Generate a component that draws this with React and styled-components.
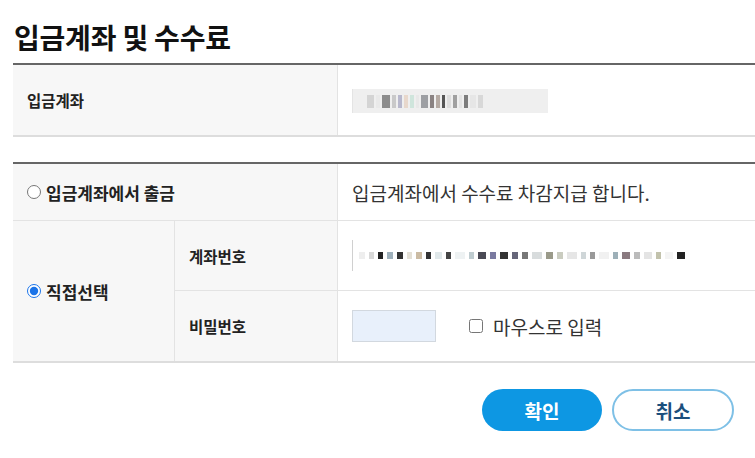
import React from 'react';
import styled, { createGlobalStyle } from 'styled-components';

const GlobalStyle = createGlobalStyle`
  html, body {
    margin: 0;
    padding: 0;
    background: #fff;
  }
  body {
    font-family: 'Noto Sans CJK KR', 'Noto Sans', sans-serif;
    color: #222;
  }
`;

// mosaic blocks for the blurred account numbers
const topMosaic = [
  ['#d4d4d4', 7], ['#e9e9e9', 4], ['#8c8c8c', 8], ['#c9c9c9', 4], ['#b8b8cc', 4],
  ['#e8d8cc', 4], ['#cfe5dc', 4], ['#e8e8e8', 3], ['#9d9fa3', 7], ['#8a8282', 4],
  ['#b5aaa3', 4], ['#555', 3], ['#dedede', 4], ['#a0a0a0', 4], ['#e4e4e4', 3],
  ['#7d7d7d', 4], ['#e6e6e6', 6], ['#d8d8d8', 5],
];

const accMosaic = [
  ['#eee', 6], ['#d8d8d8', 5], ['#222', 5], ['#9eb0bb', 6], ['#333', 6], ['#e4e0d6', 5],
  ['#cbbba3', 6], ['#333', 5], ['#e0e8ea', 7], ['#444', 5], ['#eef2f3', 10], ['#bfccd0', 5],
  ['#4a4a55', 8], ['#7a7aa0', 6], ['#333', 8], ['#66667a', 6], ['#777', 6], ['#d8dcdd', 10],
  ['#9a9a8a', 7], ['#caccc0', 6], ['#e6e6e6', 10], ['#cfd6d8', 5], ['#999', 5], ['#f1f1f1', 10],
  ['#9db0b8', 5], ['#8a7a80', 8], ['#bbb', 6], ['#e4e4e4', 8], ['#c2c2ac', 5], ['#f4f4f4', 8],
  ['#222', 8],
];

function Mosaic({ blocks, height, gap = 2 }) {
  let x = 0;
  const rects = blocks.map(([c, w], i) => {
    const r = <rect key={i} x={x} y={0} width={w} height={height} fill={c} />;
    x += w + gap;
    return r;
  });
  return (
    <svg width={x} height={height} viewBox={`0 0 ${x} ${height}`}>
      {rects}
    </svg>
  );
}

function App() {
  return (
    <>
      <GlobalStyle />
      <Page>
        <Title>입금계좌 및 수수료</Title>
        <Table>
          <HeadCell>입금계좌</HeadCell>
          <Cell>
            <BlurField>
              <Mosaic blocks={topMosaic} height={13} />
            </BlurField>
          </Cell>
        </Table>

        <Table $second>
          <HeadCell $cols={2} $line $big>
            <Radio type="radio" name="fee" />
            입금계좌에서 출금
          </HeadCell>
          <Cell $line>입금계좌에서 수수료 차감지급 합니다.</Cell>

          <HeadCell $rows={2} $big>
            <Radio type="radio" name="fee" defaultChecked />
            직접선택
          </HeadCell>
          <HeadCell $line>계좌번호</HeadCell>
          <Cell $line>
            <AccountField>
              <Mosaic blocks={accMosaic} height={7} gap={4} />
            </AccountField>
          </Cell>
          <HeadCell>비밀번호</HeadCell>
          <Cell>
            <PasswordInput type="password" />
            <CheckLabel>
              <CheckBox type="checkbox" />
              마우스로 입력
            </CheckLabel>
          </Cell>
        </Table>

        <Buttons>
          <PrimaryButton>확인</PrimaryButton>
          <GhostButton>취소</GhostButton>
        </Buttons>
      </Page>
    </>
  );
}

export default App;

const Page = styled.div`
  width: 755px;
  padding-left: 13px;
  box-sizing: border-box;
`;

const Title = styled.h2`
  margin: 0;
  padding: 19px 0 0 1px;
  height: 44px;
  font-size: 28px;
  font-weight: 700;
  line-height: 36px;
  color: #111;
  letter-spacing: -0.2px;
`;

const Table = styled.div`
  display: grid;
  grid-template-columns: ${(p) => (p.$second ? '162px 163px 1fr' : '325px 1fr')};
  grid-template-rows: ${(p) => (p.$second ? '57px 70px 70px' : '70px')};
  border-top: 2px solid #666;
  border-bottom: 2px solid #ddd;
  margin-top: ${(p) => (p.$second ? '25px' : '0')};
`;

const HeadCell = styled.div`
  display: flex;
  align-items: center;
  background: #f7f7f7;
  border-right: 1px solid #e3e3e3;
  border-bottom: ${(p) => (p.$line ? '1px solid #e3e3e3' : 'none')};
  padding-left: 14px;
  font-size: ${(p) => (p.$big ? '17px' : '15.5px')};
  font-weight: 700;
  color: #222;
  grid-column: ${(p) => (p.$cols ? `span ${p.$cols}` : 'auto')};
  grid-row: ${(p) => (p.$rows ? `span ${p.$rows}` : 'auto')};
`;

const Cell = styled.div`
  display: flex;
  align-items: center;
  padding-left: 14px;
  font-size: 19px;
  color: #333;
  border-bottom: ${(p) => (p.$line ? '1px solid #e3e3e3' : 'none')};
`;

const BlurField = styled.div`
  width: 196px;
  height: 24px;
  background: #efefef;
  border-left: 1px solid #e4e4e4;
  display: flex;
  align-items: center;
  padding-left: 14px;
  box-sizing: border-box;
  margin-top: 2px;
`;

const AccountField = styled.div`
  width: 338px;
  height: 31px;
  border-left: 1px solid #d0d0d0;
  display: flex;
  align-items: center;
  padding-left: 6px;
  box-sizing: border-box;
`;

const Radio = styled.input`
  width: 14px;
  height: 14px;
  margin: 0 5px 0 0;
  accent-color: #1a73e8;
`;

const PasswordInput = styled.input`
  width: 84px;
  height: 32px;
  box-sizing: border-box;
  border: 1px solid #d2d8df;
  background: #e8f0fb;
  outline: none;
`;

const CheckLabel = styled.label`
  display: flex;
  align-items: center;
  margin-left: 33px;
  font-size: 19px;
  color: #333;
`;

const CheckBox = styled.input`
  width: 14px;
  height: 14px;
  margin: 0 10px 0 0;
`;

const Buttons = styled.div`
  display: flex;
  justify-content: flex-end;
  gap: 10px;
  padding: 26px 21px 0 0;
`;

const PrimaryButton = styled.button`
  width: 120px;
  height: 42px;
  border-radius: 21px;
  border: none;
  background: #0d97e3;
  color: #fff;
  font-family: inherit;
  font-size: 19px;
  font-weight: 700;
`;

const GhostButton = styled.button`
  width: 122px;
  height: 42px;
  border-radius: 21px;
  border: 2px solid #7ec0e6;
  background: #fff;
  color: #1c4f7d;
  font-family: inherit;
  font-size: 19px;
  font-weight: 700;
`;
